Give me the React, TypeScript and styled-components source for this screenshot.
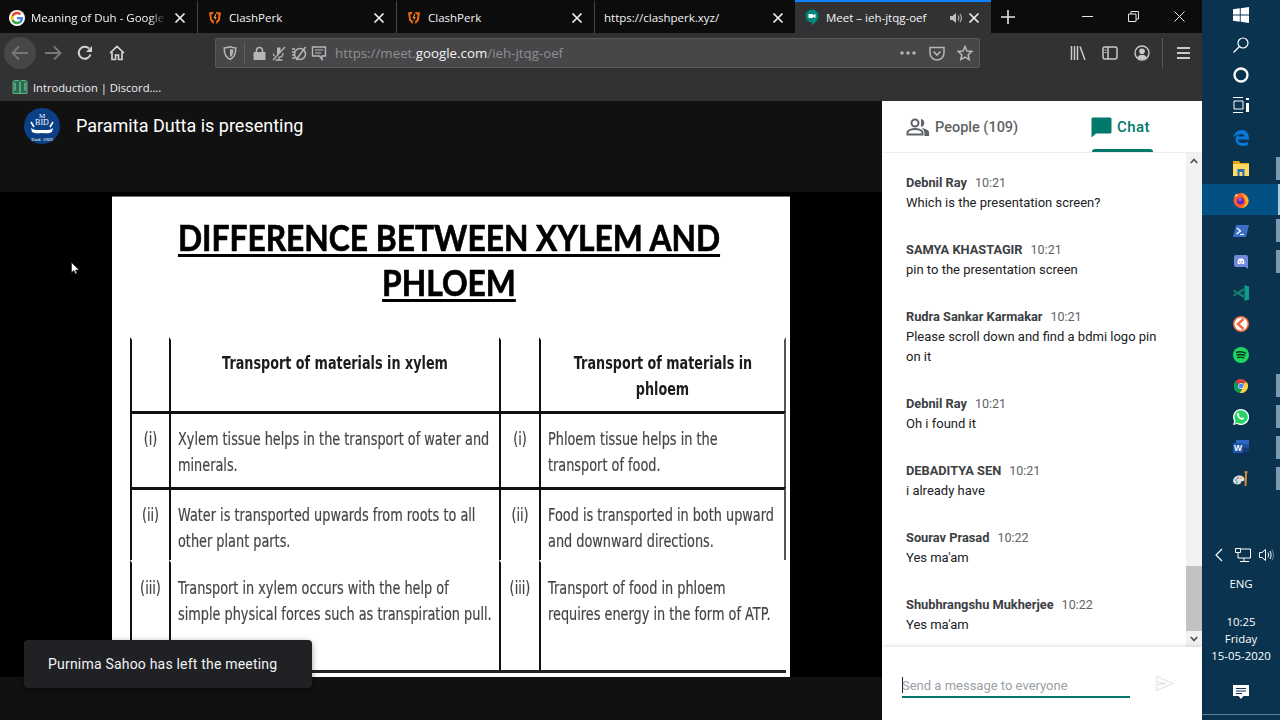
import React from "react";
import styled, { createGlobalStyle } from "styled-components";

const GlobalStyle = createGlobalStyle`
  html, body {
    margin: 0;
    padding: 0;
    background: #000;
    overflow: hidden;
  }
  * {
    box-sizing: border-box;
  }
`;

const Screen = styled.div`
  display: flex;
  width: 1280px;
  height: 720px;
  overflow: hidden;
  font-family: "Open Sans", "Liberation Sans", sans-serif;
`;

const Browser = styled.div`
  display: flex;
  flex-direction: column;
  width: 1202px;
  height: 720px;
`;

/* ---- tab strip ---- */

const TabStrip = styled.div`
  display: flex;
  height: 33px;
  flex-shrink: 0;
  background: #0c0c0d;
`;

const Tab = styled.div<{ $width: number; $active?: boolean; $divider?: boolean }>`
  display: flex;
  align-items: center;
  gap: 6px;
  width: ${(p) => p.$width}px;
  padding: 0 9px;
  color: #f4f4f4;
  font-size: 11.5px;
  background: ${(p) => (p.$active ? "#323234" : "transparent")};
  border-top: ${(p) => (p.$active ? "2px solid #0a84ff" : "2px solid transparent")};
  border-right: ${(p) => (p.$divider ? "1px solid #47474a" : "none")};
`;

const TabIcon = styled.span`
  display: flex;
  align-items: center;
  justify-content: center;
  width: 16px;
  height: 16px;
  flex-shrink: 0;
`;

const TabTitle = styled.span<{ $fade?: boolean }>`
  flex: 1;
  white-space: nowrap;
  ${(p) =>
    p.$fade &&
    `mask-image: linear-gradient(to right, #000 88%, transparent 100%);`}
`;

const TabClose = styled.span`
  display: flex;
  align-items: center;
  justify-content: center;
  width: 16px;
  height: 16px;
  color: #f0f0f0;
  flex-shrink: 0;
`;

const TabSound = styled.span`
  display: flex;
  margin-right: -3px;
`;

const NewTab = styled.div`
  display: flex;
  align-items: center;
  justify-content: center;
  width: 34px;
  color: #e4e4e4;
`;

const WindowControls = styled.div`
  display: flex;
  margin-left: auto;
`;

const WindowButton = styled.div`
  display: flex;
  align-items: center;
  justify-content: center;
  width: 46px;
  color: #e8e8e8;
`;

/* ---- nav bar ---- */

const NavBar = styled.div`
  display: flex;
  align-items: center;
  height: 38px;
  flex-shrink: 0;
  padding: 2px 2px 0 4px;
  background: #323234;
  color: #c9c9ca;
`;

const NavButton = styled.div<{ $round?: boolean; $dim?: boolean }>`
  display: flex;
  align-items: center;
  justify-content: center;
  width: 32px;
  height: 32px;
  margin-right: ${(p) => (p.$round ? 1 : 0)}px;
  border-radius: 50%;
  color: ${(p) => (p.$dim ? "#77777a" : "#d4d4d5")};
  background: ${(p) => (p.$round ? "#47474a" : "transparent")};
`;

const NavGroup = styled.div`
  display: flex;
  margin-right: 82px;
`;

const UrlBar = styled.div`
  display: flex;
  align-items: center;
  width: 765px;
  height: 30px;
  background: #474749;
  border: 1px solid #59595b;
  border-radius: 2px;
  color: #b6b6b8;
`;

const UrlIcon = styled.span<{ $width?: number }>`
  display: flex;
  align-items: center;
  justify-content: center;
  width: ${(p) => p.$width ?? 20}px;
  flex-shrink: 0;
`;

const UrlDivider = styled.span`
  width: 1px;
  height: 22px;
  margin-right: 4px;
  background: #5f5f62;
`;

const UrlText = styled.div`
  flex: 1;
  margin-left: 6px;
  font-size: 13.3px;
  color: #8f8f92;
  white-space: nowrap;
  b {
    font-weight: 400;
    color: #f2f2f2;
  }
`;

const ToolGroup = styled.div`
  display: flex;
  align-items: center;
  margin-left: 82px;
  color: #c9c9ca;
`;

const ToolButton = styled.div`
  display: flex;
  align-items: center;
  justify-content: center;
  width: 32px;
  height: 30px;
`;

const ToolDivider = styled.span`
  width: 1px;
  height: 30px;
  margin: 0 4px;
  background: #59595b;
`;

/* ---- bookmarks ---- */

const BookmarkBar = styled.div`
  display: flex;
  align-items: center;
  gap: 5px;
  height: 30px;
  flex-shrink: 0;
  padding: 2px 0 0 12px;
  background: #323234;
  color: #f0f0f0;
  font-size: 11.2px;
`;

/* ---- meet area ---- */

const Meet = styled.div`
  display: flex;
  flex: 1;
  min-height: 0;
`;

const Stage = styled.div`
  position: relative;
  display: flex;
  flex-direction: column;
  width: 882px;
  background: #000;
`;

const PresenterBar = styled.div`
  display: flex;
  align-items: flex-start;
  gap: 16px;
  height: 91px;
  flex-shrink: 0;
  padding: 7px 0 0 24px;
  background: #111;
  color: #fff;
  font-family: Roboto, sans-serif;
  font-size: 18px;
  line-height: 36px;
`;

const SlideArea = styled.div`
  flex: 1;
  padding: 4px 92px 0 112px;
  background: #000;
`;

const Slide = styled.div`
  height: 481px;
  padding: 18px 4px 0 18px;
  background: #fff;
  border-top: 1px solid #777;
  color: #000;
`;

const SlideTitle = styled.h1`
  margin: 0 0 32px;
  width: 638px;
  font-family: Lato, "Open Sans", sans-serif;
  font-size: 36.5px;
  font-weight: 700;
  line-height: 45px;
  text-align: center;
  text-decoration: underline;
  text-decoration-thickness: 3px;
  text-underline-offset: 3px;
  white-space: nowrap;
  -webkit-text-stroke: 0.7px #000;
  transform: scaleX(0.87);
`;

const Table = styled.div`
  display: grid;
  grid-template-columns: 39px 330px 40px 247px;
  grid-template-rows: 74px 76px 73px 110px;
  border-bottom: 3px solid #222;
  filter: blur(0.35px);
`;

const Cell = styled.div<{ $rule?: boolean; $edge?: boolean; $center?: boolean }>`
  padding: ${(p) => (p.$center ? "12px 0 0" : "12px 0 0 7px")};
  border-left: 2px solid #111;
  border-top: 3px solid ${(p) => (p.$rule ? "#111" : "transparent")};
  border-right: ${(p) => (p.$edge ? "2px solid #555" : "none")};
`;

const HeadText = styled.div`
  margin-top: -2px;
  font-family: "DejaVu Sans", sans-serif;
  font-size: 17.5px;
  font-weight: 700;
  line-height: 26px;
  text-align: center;
  color: #1c1c1c;
  white-space: nowrap;
  transform: scaleX(0.73);
`;

const BodyText = styled.div`
  width: 136%;
  font-family: "DejaVu Sans", sans-serif;
  font-size: 17.5px;
  line-height: 26px;
  color: #444;
  white-space: nowrap;
  -webkit-text-stroke: 0.2px #444;
  transform: scaleX(0.735);
  transform-origin: left top;
`;

const RowLabel = styled.div`
  font-family: "DejaVu Sans", sans-serif;
  font-size: 17.5px;
  line-height: 26px;
  text-align: center;
  color: #444;
  white-space: nowrap;
  -webkit-text-stroke: 0.2px #444;
  transform: scaleX(0.735);
`;

const BottomStrip = styled.div`
  height: 43px;
  flex-shrink: 0;
  background: #111;
`;

const Toast = styled.div`
  position: absolute;
  left: 24px;
  bottom: 32px;
  display: flex;
  align-items: center;
  width: 288px;
  height: 48px;
  padding-left: 24px;
  border-radius: 4px;
  background: #202124;
  color: #f1f3f4;
  font-family: Roboto, sans-serif;
  font-size: 14px;
  letter-spacing: 0.2px;
  box-shadow: 0 2px 6px rgba(0, 0, 0, 0.4);
`;

const Pointer = styled.svg`
  position: absolute;
  left: 71px;
  top: 161px;
`;

/* ---- side panel ---- */

const Panel = styled.div`
  display: flex;
  flex-direction: column;
  width: 320px;
  background: #fff;
  font-family: Roboto, sans-serif;
`;

const PanelTabs = styled.div`
  display: flex;
  height: 52px;
  flex-shrink: 0;
  border-bottom: 1px solid #eceef0;
`;

const PanelTab = styled.div<{ $active?: boolean; $width: number }>`
  position: relative;
  display: flex;
  align-items: center;
  gap: 5px;
  width: ${(p) => p.$width}px;
  padding-top: 1px;
  padding-left: ${(p) => (p.$active ? 0 : 24)}px;
  color: ${(p) => (p.$active ? "#00796b" : "#5f6368")};
  font-size: ${(p) => (p.$active ? 15 : 14.5)}px;
  font-weight: 500;
  letter-spacing: ${(p) => (p.$active ? 0.4 : 0)}px;
  ${(p) =>
    p.$active &&
    `margin-left: 49px;
     &::after {
       content: "";
       position: absolute;
       left: 1px;
       bottom: 0;
       width: 61px;
       height: 3px;
       background: #00796b;
       border-radius: 3px 3px 0 0;
     }`}
`;

const ChatBody = styled.div`
  display: flex;
  flex: 1;
  min-height: 0;
`;

const Messages = styled.div`
  flex: 1;
  display: flex;
  flex-direction: column;
  gap: 27px;
  padding: 20px 24px 0;
`;

const Message = styled.div`
  font-size: 13px;
  line-height: 20px;
  color: #202124;
`;

const Sender = styled.div`
  display: flex;
  gap: 8px;
  font-size: 12.8px;
  font-weight: 700;
  color: #3c4043;
`;

const SentAt = styled.span`
  font-size: 12.5px;
  font-weight: 400;
  color: #5f6368;
`;

const Scrollbar = styled.div`
  display: flex;
  flex-direction: column;
  width: 16px;
  background: #f1f1f1;
`;

const ScrollArrow = styled.div`
  display: flex;
  align-items: center;
  justify-content: center;
  height: 16px;
  color: #505050;
`;

const ScrollThumb = styled.div`
  height: 65px;
  margin-top: auto;
  background: #c1c1c1;
`;

const Composer = styled.div`
  display: flex;
  align-items: flex-start;
  height: 73px;
  flex-shrink: 0;
  padding: 29px 0 0 20px;
  box-shadow: 0 -1px 4px rgba(0, 0, 0, 0.12);
  z-index: 1;
`;

const ComposerField = styled.div`
  width: 228px;
  height: 22px;
  border-bottom: 2px solid #00796b;
  font-size: 13px;
  line-height: 20px;
  color: #9aa0a6;
`;

const Caret = styled.span`
  display: inline-block;
  width: 1px;
  height: 16px;
  margin-right: -1px;
  vertical-align: -3px;
  background: #202124;
`;

const SendButton = styled.div`
  margin: -1px 0 0 25px;
  color: #e8eaed;
`;

/* ---- windows taskbar ---- */

const Taskbar = styled.div`
  display: flex;
  flex-direction: column;
  width: 78px;
  height: 720px;
  background: #0a3350;
`;

const SystemGroup = styled.div`
  display: flex;
  flex-direction: column;
  margin-bottom: 2px;
`;

const SystemButton = styled.div`
  display: flex;
  align-items: center;
  justify-content: center;
  height: 30px;
  color: #fff;
`;

const AppGroup = styled.div`
  display: flex;
  flex-direction: column;
`;

const AppButton = styled.div<{ $running?: boolean; $active?: boolean }>`
  position: relative;
  display: flex;
  align-items: center;
  justify-content: center;
  height: 31px;
  background: ${(p) => (p.$active ? "#035085" : "transparent")};
  ${(p) =>
    (p.$running || p.$active) &&
    `&::after {
      content: "";
      position: absolute;
      right: 0;
      top: ${p.$active ? 0 : 4}px;
      bottom: ${p.$active ? 0 : 4}px;
      width: ${p.$active ? 2 : 4}px;
      background: ${p.$active ? "#a9cbe0" : "#7c9bb0"};
    }`}
`;

const Tray = styled.div`
  display: flex;
  flex-direction: column;
  align-items: center;
  margin-top: auto;
  height: 171px;
  border-bottom: 1px solid #5d7f98;
  margin-bottom: 5px;
  color: #fff;
  font-family: "Open Sans", sans-serif;
  font-size: 11.4px;
`;

const TrayIcons = styled.div`
  display: flex;
  align-items: center;
  gap: 12px;
  height: 22px;
  margin: 0 0 9px 6px;
`;

const TrayVolume = styled.span`
  display: flex;
  margin-left: -4px;
`;

const TrayLabel = styled.div`
  line-height: 17px;
  margin-bottom: 21px;
`;

const Clock = styled.div`
  text-align: center;
  line-height: 17px;
  margin-bottom: 21px;
`;

/* ---- drawn icons ---- */

const GoogleIcon = () => (
  <svg width="16" height="16" viewBox="0 0 48 48">
    <circle cx="24" cy="24" r="24" fill="#fff" />
    <path fill="#EA4335" d="M24 13c3 0 5.400 1 7.300 2.800l5.300-5.300C33.300 7.400 29 5.500 24 5.500c-7.200 0-13.400 4.100-16.500 10.200l6.200 4.800C15.200 16.100 19.200 13 24 13z" />
    <path fill="#4285F4" d="M42 24.500c0-1.400-.1-2.400-.4-3.500H24v7h10.100c-.4 2.500-1.900 4.600-4.200 6l6.100 4.700c3.700-3.400 6-8.300 6-14.200z" />
    <path fill="#FBBC05" d="M13.700 27.500c-.4-1.100-.6-2.300-.6-3.500s.2-2.400.6-3.500l-6.200-4.800C6.200 18.200 5.500 21 5.500 24s.7 5.800 2 8.300l6.200-4.800z" />
    <path fill="#34A853" d="M24 42.500c5 0 9.200-1.600 12-4.800l-6.100-4.700c-1.600 1.100-3.600 1.900-5.900 1.900-4.800 0-8.800-3.100-10.300-7.400l-6.200 4.800C10.600 38.400 16.800 42.500 24 42.500z" />
  </svg>
);

const ClashIcon = () => (
  <svg width="14" height="14" viewBox="0 0 14 14">
    <path fill="#f06a12" d="M1 1.500 5.500.8 5 3 3.300 3.400 3.800 8 6 10.500 5.500 13 2.200 9.500z" />
    <path fill="#f06a12" d="M8 1 13 1.500 11.800 9.500 8.500 13 8 10.500 10 8.200 10.500 3.400 8.500 3z" />
    <path fill="#f8a04a" d="M7.300 3 5.600 7 7 7 6.300 10 8.800 6 7.300 6 8.200 3z" />
  </svg>
);

const MeetIcon = () => (
  <svg width="14" height="17" viewBox="0 0 14 17">
    <path fill="#00897b" d="M7 .5a6.500 6.500 0 0 1 6.500 6.500c0 4-4 7-6.500 9.500V13.500A6.500 6.500 0 0 1 7 .5z" />
    <path fill="#fff" d="M3.500 5h4.500v1.500L10.500 4.800v4.400L8 7.500V9H3.500z" />
  </svg>
);

const CloseGlyph = () => (
  <svg width="12" height="12" viewBox="0 0 12 12">
    <path d="M1.500 1.500l9 9M10.500 1.500l-9 9" stroke="currentColor" strokeWidth="1.700" fill="none" />
  </svg>
);

const SpeakerGlyph = () => (
  <svg width="14" height="14" viewBox="0 0 14 14">
    <path fill="#bdbdbd" d="M1 5h2.500L7 2v10L3.500 9H1z" />
    <path d="M9 4.500c1 1.500 1 3.500 0 5M11 3c1.700 2.400 1.700 5.600 0 8" stroke="#bdbdbd" strokeWidth="1.100" fill="none" />
  </svg>
);

const ArrowGlyph = ({ flip }: { flip?: boolean }) => (
  <svg width="18" height="16" viewBox="0 0 18 16" style={flip ? { transform: "scaleX(-1)" } : undefined}>
    <path d="M8 1.500 1.500 8 8 14.500M2 8h15" stroke="currentColor" strokeWidth="1.900" fill="none" />
  </svg>
);

const ReloadGlyph = () => (
  <svg width="16" height="16" viewBox="0 0 16 16">
    <path d="M13.500 9.500A6 6 0 1 1 12 3.500" stroke="currentColor" strokeWidth="2" fill="none" />
    <path d="M15 1v6H9z" fill="currentColor" />
  </svg>
);

const HomeGlyph = () => (
  <svg width="16" height="16" viewBox="0 0 16 16">
    <path d="M1 8 8 1.500 15 8M3 7v7.500h3.500V10h3v4.500H13V7" stroke="currentColor" strokeWidth="1.700" fill="none" />
  </svg>
);

const ShieldGlyph = () => (
  <svg width="14" height="14" viewBox="0 0 14 14">
    <path d="M7 .8c2 .9 3.600 1.100 5.800 1.200 0 5-1 9.300-5.800 11.500C2.200 11.300 1.200 7 1.200 2 3.400 1.900 5 1.700 7 .8z" stroke="currentColor" strokeWidth="1.500" fill="none" />
    <path d="M7 3c1.100.4 2 .6 3.400.7C10.300 7 9.800 9.700 7 11.200z" fill="currentColor" />
  </svg>
);

const LockGlyph = () => (
  <svg width="13" height="14" viewBox="0 0 13 14">
    <path d="M3.500 6.500V4.500a3 3 0 0 1 6 0v2" stroke="currentColor" strokeWidth="1.600" fill="none" />
    <rect x="0.500" y="6" width="12" height="8" rx="1" fill="currentColor" />
  </svg>
);

const MicOffGlyph = () => (
  <svg width="14" height="15" viewBox="0 0 14 15">
    <path d="M5 1.500h3.500v4L5 9z" fill="currentColor" />
    <path d="M1.500 7.500c0 1 .3 2 .8 2.700M11 7c0 2.500-1.800 4.200-4 4.200v2.300M3.500 14h7M13 1 1 14" stroke="currentColor" strokeWidth="1.300" fill="none" />
  </svg>
);

const CameraOffGlyph = () => (
  <svg width="17" height="15" viewBox="0 0 17 15">
    <circle cx="9" cy="8" r="5.500" stroke="currentColor" strokeWidth="1.500" fill="none" />
    <path d="M1 3h3M1 6h2M1 9h2M1 12h3M14.500 1 5 14" stroke="currentColor" strokeWidth="1.500" fill="none" />
  </svg>
);

const SpeechGlyph = () => (
  <svg width="16" height="15" viewBox="0 0 16 15">
    <path d="M1.500 1h13v9H11v3.500L8.500 10h-7z" stroke="currentColor" strokeWidth="1.400" fill="none" />
    <path d="M4 4h8M4 7h6" stroke="currentColor" strokeWidth="1.200" />
  </svg>
);

const DotsGlyph = () => (
  <svg width="16" height="4" viewBox="0 0 16 4" fill="currentColor">
    <circle cx="2" cy="2" r="1.700" />
    <circle cx="8" cy="2" r="1.700" />
    <circle cx="14" cy="2" r="1.700" />
  </svg>
);

const PocketGlyph = () => (
  <svg width="16" height="15" viewBox="0 0 16 15">
    <path d="M1 1.500h14v5.500a7 7 0 0 1-14 0z" stroke="currentColor" strokeWidth="1.500" fill="none" />
    <path d="M4.500 5.500 8 9l3.500-3.500" stroke="currentColor" strokeWidth="1.700" fill="none" />
  </svg>
);

const StarGlyph = () => (
  <svg width="16" height="16" viewBox="0 0 16 16">
    <path d="M8 1.500 10 6l4.800.5-3.600 3.200 1 4.800L8 12l-4.200 2.500 1-4.800L1.200 6.500 6 6z" stroke="currentColor" strokeWidth="1.500" fill="none" />
  </svg>
);

const LibraryGlyph = () => (
  <svg width="16" height="14" viewBox="0 0 16 14">
    <path d="M1.500 0v14M4.500 0v14M7.500 0v14M10 .5 15 14" stroke="currentColor" strokeWidth="1.500" fill="none" />
  </svg>
);

const SidebarGlyph = () => (
  <svg width="16" height="14" viewBox="0 0 16 14">
    <rect x="1" y="1" width="14" height="12" rx="2" stroke="currentColor" strokeWidth="1.500" fill="none" />
    <path d="M6 1v12" stroke="currentColor" strokeWidth="1.500" />
    <path d="M2.500 4h2M2.500 6.500h2" stroke="currentColor" strokeWidth="1.200" />
  </svg>
);

const AccountGlyph = () => (
  <svg width="16" height="16" viewBox="0 0 16 16">
    <circle cx="8" cy="8" r="7" stroke="currentColor" strokeWidth="1.400" fill="none" />
    <circle cx="8" cy="6.200" r="2.800" fill="currentColor" />
    <path d="M3.300 12.500c1-2 3-2.700 4.700-2.700s3.700.7 4.700 2.700A6.500 6.500 0 0 1 3.300 12.500z" fill="currentColor" />
  </svg>
);

const BookGlyph = () => (
  <svg width="16" height="16" viewBox="0 0 16 16">
    <path d="M1 2.500 2.500 1.500H7l1 1 1-1h4.500L15 2.500V14.500H1z" fill="#2d6a4f" stroke="#58b88a" strokeWidth="1" />
    <path d="M8 3v11M3 3.500v8M13 3.500v8" stroke="#7ddba8" strokeWidth="1" />
  </svg>
);

const PeopleGlyph = () => (
  <svg width="24" height="18" viewBox="0 0 24 18">
    <circle cx="9" cy="5" r="3.500" stroke="#5f6368" strokeWidth="2" fill="none" />
    <path d="M1.500 16.500v-2c0-2.500 4.500-3.500 7.500-3.500s7.500 1 7.500 3.500v2z" stroke="#5f6368" strokeWidth="2" fill="none" />
    <path d="M15 1.600a3.500 3.500 0 0 1 0 6.800M17.500 11c2.500.6 5 1.700 5 3.500v3h-3.500v-3c0-1.400-.6-2.600-1.500-3.500z" stroke="#5f6368" strokeWidth="1.200" fill="#5f6368" />
  </svg>
);

const ChatGlyph = () => (
  <svg width="21" height="21" viewBox="0 0 21 21">
    <path fill="#00796b" d="M2 .5h17a1.500 1.500 0 0 1 1.500 1.500v13a1.500 1.500 0 0 1-1.500 1.500H5L.5 20.500V2A1.500 1.500 0 0 1 2 .5z" />
  </svg>
);

const ChevronGlyph = ({ down }: { down?: boolean }) => (
  <svg width="8" height="6" viewBox="0 0 8 6">
    <path d={down ? "M.8 1 4 4.500 7.200 1" : "M.8 5 4 1.500 7.200 5"} stroke="currentColor" strokeWidth="1.700" fill="none" />
  </svg>
);

const SendGlyph = () => (
  <svg width="20" height="17" viewBox="0 0 20 17">
    <path d="M1.500 1.500 18 8.500 1.500 15.500V10L11 8.500 1.500 7z" stroke="currentColor" strokeWidth="1.600" fill="none" />
  </svg>
);

const SchoolLogo = () => (
  <svg width="36" height="36" viewBox="0 0 36 36">
    <circle cx="18" cy="18" r="18" fill="#0b3f86" />
    <g fill="#fff" fontFamily="Liberation Serif, serif" textAnchor="middle">
      <text x="18" y="10" fontSize="7">M</text>
      <text x="18" y="17" fontSize="8">BID</text>
      <text x="18" y="33" fontSize="5">Estd. 1969</text>
    </g>
    <path d="M7 20c3 2.500 7 2 11 2s8 .5 11-2l-1 4c-3.500 2-6.500 1-10 1s-6.500 1-10-1z" fill="#fff" />
    <path d="M7 14l3 5M29 14l-3 5" stroke="#fff" strokeWidth="1.600" />
  </svg>
);

const WindowsLogo = () => (
  <svg width="16" height="16" viewBox="0 0 16 16" fill="#fff">
    <path d="M0 2.300 6.800 1.300V7.500H0zM7.700 1.200 16 0V7.500H7.700zM0 8.500h6.800v6.200L0 13.700zM7.700 8.500H16V16L7.700 14.800z" />
  </svg>
);

const SearchGlyph = () => (
  <svg width="16" height="16" viewBox="0 0 16 16">
    <circle cx="10" cy="6" r="5" stroke="#fff" strokeWidth="1.200" fill="none" />
    <path d="M6.500 9.500 .5 15.500" stroke="#fff" strokeWidth="1.300" />
  </svg>
);

const CortanaGlyph = () => (
  <svg width="16" height="16" viewBox="0 0 16 16">
    <circle cx="8" cy="8" r="6.500" stroke="#fff" strokeWidth="2.300" fill="none" />
  </svg>
);

const TaskViewGlyph = () => (
  <svg width="16" height="16" viewBox="0 0 16 16">
    <path d="M0 .5h10M0 15.500h10M1 4h9v8H1z" stroke="#fff" strokeWidth="1" fill="none" />
    <path d="M13 1h3v2h-3zM13 6h3v9h-3z" fill="#fff" />
  </svg>
);

const EdgeIcon = () => (
  <svg width="16" height="16" viewBox="0 0 16 16">
    <path fill="#0a78d7" d="M.3 7.500C1 3 4.300 0 8.500 0 13 0 16 3.300 16 8.500v1H5c.2 3 4.700 4.800 9.800 2.300v3.300C9.500 17.300 2.600 15.500 2.500 9.500 2.400 7 4 5 6.300 4c-2.500.3-4.600 1.600-6 3.500zM5.300 6.500h6C11.300 3.200 5.800 3.200 5.300 6.500z" />
  </svg>
);

const FolderIcon = () => (
  <svg width="16" height="15" viewBox="0 0 16 15">
    <path fill="#e8a80c" d="M0 0h6l1.500 2H16v2H0z" />
    <path fill="#ffd964" d="M0 3h16v12H0z" />
    <path fill="#1f6fb5" d="M4.500 8h7v7h-2v-4h-3v4h-2z" />
  </svg>
);

const FirefoxIcon = () => (
  <svg width="16" height="16" viewBox="0 0 16 16">
    <circle cx="8" cy="8.500" r="7.500" fill="#ff5a2c" />
    <path fill="#ffb01f" d="M8 1c3 1 7 3 7.500 7.500S12 16 8 16c2.500-1 5-3.500 4.500-7C12 6 10 3 8 1z" />
    <path fill="#ffd23f" d="M1 5c1-2 2-3 3-3.500L5 4z" />
    <circle cx="7.500" cy="9" r="3.500" fill="#5b2bb5" />
    <circle cx="7" cy="7.500" r="1.800" fill="#a45bdc" />
  </svg>
);

const PowerShellIcon = () => (
  <svg width="16" height="12" viewBox="0 0 16 12">
    <path fill="#3a6fc6" d="M3 0h13l-3 12H0z" />
    <path d="M4 3l3.500 3L3.500 9" stroke="#fff" strokeWidth="1.300" fill="none" />
    <path d="M7 9.500h4" stroke="#fff" strokeWidth="1.100" />
  </svg>
);

const DiscordIcon = () => (
  <svg width="14" height="14" viewBox="0 0 14 14">
    <path fill="#7289da" d="M2 0h10a2 2 0 0 1 2 2v12l-2.500-2H2a2 2 0 0 1-2-2V2a2 2 0 0 1 2-2z" />
    <path fill="#fff" d="M3.500 8.500C3.500 6 4.500 4 5 3.800c1.300-.5 2.700-.5 4 0 .5.200 1.500 2.200 1.500 4.700-1 .8-2 .8-2 .8L8 8.500H6l-.5.800s-1 0-2-.8z" />
    <circle cx="5.700" cy="6.800" r=".8" fill="#7289da" />
    <circle cx="8.300" cy="6.800" r=".8" fill="#7289da" />
  </svg>
);

const VsCodeIcon = () => (
  <svg width="16" height="16" viewBox="0 0 16 16">
    <path fill="#0e9d8a" d="M11.500 0 16 1.500v13L11.500 16z" />
    <path fill="#14806f" d="M11 3v3L6.800 8 11 10v3L4 9l-2.500 2.500L0 10.500 2.500 8 0 5.500l1.500-1L4 7z" />
  </svg>
);

const ClickUpIcon = () => (
  <svg width="16" height="16" viewBox="0 0 16 16">
    <circle cx="8" cy="8" r="8" fill="#f26a3d" />
    <circle cx="8" cy="8" r="6.500" fill="#fff" />
    <path d="M10.500 3 5 8l5.500 5" stroke="#f26a3d" strokeWidth="2.500" fill="none" />
  </svg>
);

const SpotifyIcon = () => (
  <svg width="16" height="16" viewBox="0 0 16 16">
    <circle cx="8" cy="8" r="8" fill="#1ed760" />
    <path d="M3 5.500c3-1 7-.8 10 .8M3.600 8c2.700-.8 6-.6 8.600.7M4.200 10.500c2.300-.6 5-.4 7 .6" stroke="#0d2a1c" strokeWidth="1.400" fill="none" />
  </svg>
);

const ChromeIcon = () => (
  <svg width="14" height="14" viewBox="0 0 48 48">
    <path fill="#db4437" d="M24 0a24 24 0 0 1 20.800 12H24a12 12 0 0 0-11.300 8L5 8A24 24 0 0 1 24 0z" />
    <path fill="#0f9d58" d="M5 8l8 14a12 12 0 0 0 14 13.600L20 48A24 24 0 0 1 5 8z" />
    <path fill="#ffcd40" d="M44.800 12A24 24 0 0 1 20 48l10-17a12 12 0 0 0 0-19z" />
    <circle cx="24" cy="24" r="10" fill="#fff" />
    <circle cx="24" cy="24" r="8" fill="#4285f4" />
  </svg>
);

const WhatsAppIcon = () => (
  <svg width="16" height="16" viewBox="0 0 16 16">
    <path fill="#fff" d="M8 0a8 8 0 1 1-3.800 15L0 16l1.100-4A8 8 0 0 1 8 0z" />
    <path fill="#25d366" d="M8 1.300a6.700 6.700 0 1 1-3.400 12.400l-2.700.7.700-2.600A6.700 6.700 0 0 1 8 1.300z" />
    <path fill="#fff" d="M5.500 3.800c.5 0 .8 1.500.9 2 0 .4-.6.700-.5 1 .5 1 1.300 1.800 2.400 2.300.4 0 .7-.8 1-.8.300 0 1.700.7 1.900 1 .1.600-.7 1.500-1.700 1.500C7 10.800 4 8 4.100 5.500c0-.8.700-1.700 1.400-1.700z" />
  </svg>
);

const WordIcon = () => (
  <svg width="16" height="16" viewBox="0 0 16 16">
    <path fill="#2a68c2" d="M3 0h13v4H3z" />
    <path fill="#1d4f9c" d="M3 4h13v4H3z" />
    <path fill="#163b78" d="M3 8h13v4H3z" />
    <path fill="#102c5a" d="M3 12h13v4H3z" />
    <rect x="0" y="3" width="10" height="10" fill="#1a56ab" />
    <text x="5" y="11" textAnchor="middle" fontSize="8.500" fontWeight="700" fill="#fff" fontFamily="Liberation Sans, sans-serif">
      W
    </text>
  </svg>
);

const PaintIcon = () => (
  <svg width="16" height="16" viewBox="0 0 16 16">
    <path fill="#d9dfe6" d="M0 10c0-3 3-5.500 6-5.500s5.500 1.500 5.500 4c0 2-2 1.500-3 2-.8.500-.4 2-1.500 2.500C4 14 0 13 0 10z" />
    <circle cx="3" cy="9" r="1" fill="#3aa7df" />
    <circle cx="5" cy="7" r="1" fill="#e2574c" />
    <circle cx="8" cy="7" r="1" fill="#f5c231" />
    <circle cx="4" cy="11.500" r="1" fill="#4caf50" />
    <path d="M13 1.500 12.500 15" stroke="#e08a2c" strokeWidth="2" />
    <path d="M11.500 1h3" stroke="#d9a066" strokeWidth="1.500" />
  </svg>
);

const BackTrayGlyph = () => (
  <svg width="8" height="14" viewBox="0 0 8 14">
    <path d="M7 1 1 7l6 6" stroke="#fff" strokeWidth="1.200" fill="none" />
  </svg>
);

const NetworkGlyph = () => (
  <svg width="16" height="14" viewBox="0 0 16 14">
    <path d="M3 1h12.500v9H3zM9 10v3M5 13.500h9" stroke="#fff" strokeWidth="1" fill="none" />
    <path d="M.5.500h5v4h-5z" fill="#0a3350" stroke="#fff" strokeWidth="1" />
  </svg>
);

const VolumeGlyph = () => (
  <svg width="15" height="14" viewBox="0 0 15 14">
    <path d="M.5 4.500h2.500L6.500 1.500v11L3 9.500H.5z" stroke="#fff" strokeWidth="1" fill="none" />
    <path d="M9 4.500c.8 1.500.8 3.500 0 5M11 3c1.400 2.500 1.400 5.500 0 8" stroke="#fff" strokeWidth="1" fill="none" />
    <path d="M13 1.500c1.900 3.500 1.900 7.500 0 11" stroke="#6a8aa0" strokeWidth="1" fill="none" />
  </svg>
);

const NotificationGlyph = () => (
  <svg width="16" height="15" viewBox="0 0 16 15">
    <path fill="#fff" d="M0 0h16v11h-5.500L8 14 5.500 11H0z" />
    <path d="M3 3.500h10M3 6h10M3 8.500h6" stroke="#0a3350" strokeWidth="1" />
  </svg>
);

/* ---- data ---- */

const chatMessages = [
  { name: "Debnil Ray", time: "10:21", lines: ["Which is the presentation screen?"] },
  { name: "SAMYA KHASTAGIR", time: "10:21", lines: ["pin to the presentation screen"] },
  {
    name: "Rudra Sankar Karmakar",
    time: "10:21",
    lines: ["Please scroll down and find a bdmi logo pin", "on it"],
  },
  { name: "Debnil Ray", time: "10:21", lines: ["Oh i found it"] },
  { name: "DEBADITYA SEN", time: "10:21", lines: ["i already have"] },
  { name: "Sourav Prasad", time: "10:22", lines: ["Yes ma'am"] },
  { name: "Shubhrangshu Mukherjee", time: "10:22", lines: ["Yes ma'am"] },
];

const tableRows = [
  {
    label: "(i)",
    xylem: ["Xylem tissue helps in the transport of water and", "minerals."],
    phloem: ["Phloem tissue helps in the", "transport of food."],
  },
  {
    label: "(ii)",
    xylem: ["Water is transported upwards from roots to all", "other plant parts."],
    phloem: ["Food is transported in both upward", "and downward directions."],
  },
  {
    label: "(iii)",
    xylem: ["Transport in xylem occurs with the help of", "simple physical forces such as transpiration pull."],
    phloem: ["Transport of food in phloem", "requires energy in the form of ATP."],
  },
];

const taskbarApps = [
  { icon: <EdgeIcon /> },
  { icon: <FolderIcon />, running: true },
  { icon: <FirefoxIcon />, active: true },
  { icon: <PowerShellIcon />, running: true },
  { icon: <DiscordIcon />, running: true },
  { icon: <VsCodeIcon /> },
  { icon: <ClickUpIcon /> },
  { icon: <SpotifyIcon /> },
  { icon: <ChromeIcon />, running: true },
  { icon: <WhatsAppIcon />, running: true },
  { icon: <WordIcon />, running: true },
  { icon: <PaintIcon />, running: true },
];

export default function App() {
  return (
    <Screen>
      <GlobalStyle />
      <Browser>
        <TabStrip>
          <Tab $width={198} $divider>
            <TabIcon>
              <GoogleIcon />
            </TabIcon>
            <TabTitle $fade>Meaning of Duh - Google</TabTitle>
            <TabClose>
              <CloseGlyph />
            </TabClose>
          </Tab>
          <Tab $width={199} $divider>
            <TabIcon>
              <ClashIcon />
            </TabIcon>
            <TabTitle>ClashPerk</TabTitle>
            <TabClose>
              <CloseGlyph />
            </TabClose>
          </Tab>
          <Tab $width={198} $divider>
            <TabIcon>
              <ClashIcon />
            </TabIcon>
            <TabTitle>ClashPerk</TabTitle>
            <TabClose>
              <CloseGlyph />
            </TabClose>
          </Tab>
          <Tab $width={200}>
            <TabTitle>https://clashperk.xyz/</TabTitle>
            <TabClose>
              <CloseGlyph />
            </TabClose>
          </Tab>
          <Tab $width={196} $active>
            <TabIcon>
              <MeetIcon />
            </TabIcon>
            <TabTitle>Meet – ieh-jtqg-oef</TabTitle>
            <TabSound>
              <SpeakerGlyph />
            </TabSound>
            <TabClose>
              <CloseGlyph />
            </TabClose>
          </Tab>
          <NewTab>
            <svg width="14" height="14" viewBox="0 0 14 14">
              <path d="M7 0v14M0 7h14" stroke="currentColor" strokeWidth="1.600" />
            </svg>
          </NewTab>
          <WindowControls>
            <WindowButton>
              <svg width="11" height="1" viewBox="0 0 11 1">
                <path d="M0 .5h11" stroke="currentColor" />
              </svg>
            </WindowButton>
            <WindowButton>
              <svg width="11" height="11" viewBox="0 0 11 11">
                <path d="M.5 3h7.500v7.500H.5zM3 3V.5h7.500V8H8" stroke="currentColor" fill="none" />
              </svg>
            </WindowButton>
            <WindowButton>
              <svg width="11" height="11" viewBox="0 0 11 11">
                <path d="M.5.500l10 10M10.500.500l-10 10" stroke="currentColor" fill="none" />
              </svg>
            </WindowButton>
          </WindowControls>
        </TabStrip>

        <NavBar>
          <NavGroup>
            <NavButton $round $dim>
              <ArrowGlyph />
            </NavButton>
            <NavButton $dim>
              <ArrowGlyph flip />
            </NavButton>
            <NavButton>
              <ReloadGlyph />
            </NavButton>
            <NavButton>
              <HomeGlyph />
            </NavButton>
          </NavGroup>
          <UrlBar>
            <UrlIcon $width={28}>
              <ShieldGlyph />
            </UrlIcon>
            <UrlDivider />
            <UrlIcon>
              <LockGlyph />
            </UrlIcon>
            <UrlIcon>
              <MicOffGlyph />
            </UrlIcon>
            <UrlIcon>
              <CameraOffGlyph />
            </UrlIcon>
            <UrlIcon>
              <SpeechGlyph />
            </UrlIcon>
            <UrlText>
              https://meet.<b>google.com</b>/ieh-jtqg-oef
            </UrlText>
            <UrlIcon $width={30}>
              <DotsGlyph />
            </UrlIcon>
            <UrlIcon $width={28}>
              <PocketGlyph />
            </UrlIcon>
            <UrlIcon $width={28}>
              <StarGlyph />
            </UrlIcon>
          </UrlBar>
          <ToolGroup>
            <ToolButton>
              <LibraryGlyph />
            </ToolButton>
            <ToolButton>
              <SidebarGlyph />
            </ToolButton>
            <ToolButton>
              <AccountGlyph />
            </ToolButton>
            <ToolDivider />
            <ToolButton>
              <svg width="13" height="12" viewBox="0 0 13 12">
                <path d="M0 1h13M0 6h13M0 11h13" stroke="currentColor" strokeWidth="1.800" />
              </svg>
            </ToolButton>
          </ToolGroup>
        </NavBar>

        <BookmarkBar>
          <BookGlyph />
          <span>Introduction | Discord....</span>
        </BookmarkBar>

        <Meet>
          <Stage>
            <PresenterBar>
              <SchoolLogo />
              <span>Paramita Dutta is presenting</span>
            </PresenterBar>
            <SlideArea>
              <Slide>
                <SlideTitle>
                  DIFFERENCE BETWEEN XYLEM AND
                  <br />
                  PHLOEM
                </SlideTitle>
                <Table>
                  <Cell $center />
                  <Cell $center>
                    <HeadText>Transport of materials in xylem</HeadText>
                  </Cell>
                  <Cell $center />
                  <Cell $center $edge>
                    <HeadText>
                      Transport of materials in
                      <br />
                      phloem
                    </HeadText>
                  </Cell>
                  {tableRows.map((row, i) => (
                    <React.Fragment key={row.label}>
                      <Cell $center $rule={i < 2}>
                        <RowLabel>{row.label}</RowLabel>
                      </Cell>
                      <Cell $rule={i < 2}>
                        <BodyText>
                          {row.xylem[0]}
                          <br />
                          {row.xylem[1]}
                        </BodyText>
                      </Cell>
                      <Cell $center $rule={i < 2}>
                        <RowLabel>{row.label}</RowLabel>
                      </Cell>
                      <Cell $rule={i < 2} $edge={i < 2}>
                        <BodyText>
                          {row.phloem[0]}
                          <br />
                          {row.phloem[1]}
                        </BodyText>
                      </Cell>
                    </React.Fragment>
                  ))}
                </Table>
              </Slide>
            </SlideArea>
            <BottomStrip />
            <Toast>Purnima Sahoo has left the meeting</Toast>
            <Pointer width="9" height="13" viewBox="0 0 9 13">
              <path d="M.5.500v10l2.500-2 1.500 3.500 1.500-.7L4.500 8H8z" fill="#fff" stroke="#222" strokeWidth=".6" />
            </Pointer>
          </Stage>

          <Panel>
            <PanelTabs>
              <PanelTab $width={160}>
                <PeopleGlyph />
                <span>People (109)</span>
              </PanelTab>
              <PanelTab $width={110} $active>
                <ChatGlyph />
                <span>Chat</span>
              </PanelTab>
            </PanelTabs>
            <ChatBody>
              <Messages>
                {chatMessages.map((msg, i) => (
                  <Message key={i}>
                    <Sender>
                      {msg.name}
                      <SentAt>{msg.time}</SentAt>
                    </Sender>
                    {msg.lines.map((line) => (
                      <div key={line}>{line}</div>
                    ))}
                  </Message>
                ))}
              </Messages>
              <Scrollbar>
                <ScrollArrow>
                  <ChevronGlyph />
                </ScrollArrow>
                <ScrollThumb />
                <ScrollArrow>
                  <ChevronGlyph down />
                </ScrollArrow>
              </Scrollbar>
            </ChatBody>
            <Composer>
              <ComposerField>
                <Caret />
                Send a message to everyone
              </ComposerField>
              <SendButton>
                <SendGlyph />
              </SendButton>
            </Composer>
          </Panel>
        </Meet>
      </Browser>

      <Taskbar>
        <SystemGroup>
          <SystemButton>
            <WindowsLogo />
          </SystemButton>
          <SystemButton>
            <SearchGlyph />
          </SystemButton>
          <SystemButton>
            <CortanaGlyph />
          </SystemButton>
          <SystemButton>
            <TaskViewGlyph />
          </SystemButton>
        </SystemGroup>
        <AppGroup>
          {taskbarApps.map((app, i) => (
            <AppButton key={i} $running={app.running} $active={app.active}>
              {app.icon}
            </AppButton>
          ))}
        </AppGroup>
        <Tray>
          <TrayIcons>
            <BackTrayGlyph />
            <NetworkGlyph />
            <TrayVolume>
              <VolumeGlyph />
            </TrayVolume>
          </TrayIcons>
          <TrayLabel>ENG</TrayLabel>
          <Clock>
            10:25
            <br />
            Friday
            <br />
            15-05-2020
          </Clock>
          <NotificationGlyph />
        </Tray>
      </Taskbar>
    </Screen>
  );
}
